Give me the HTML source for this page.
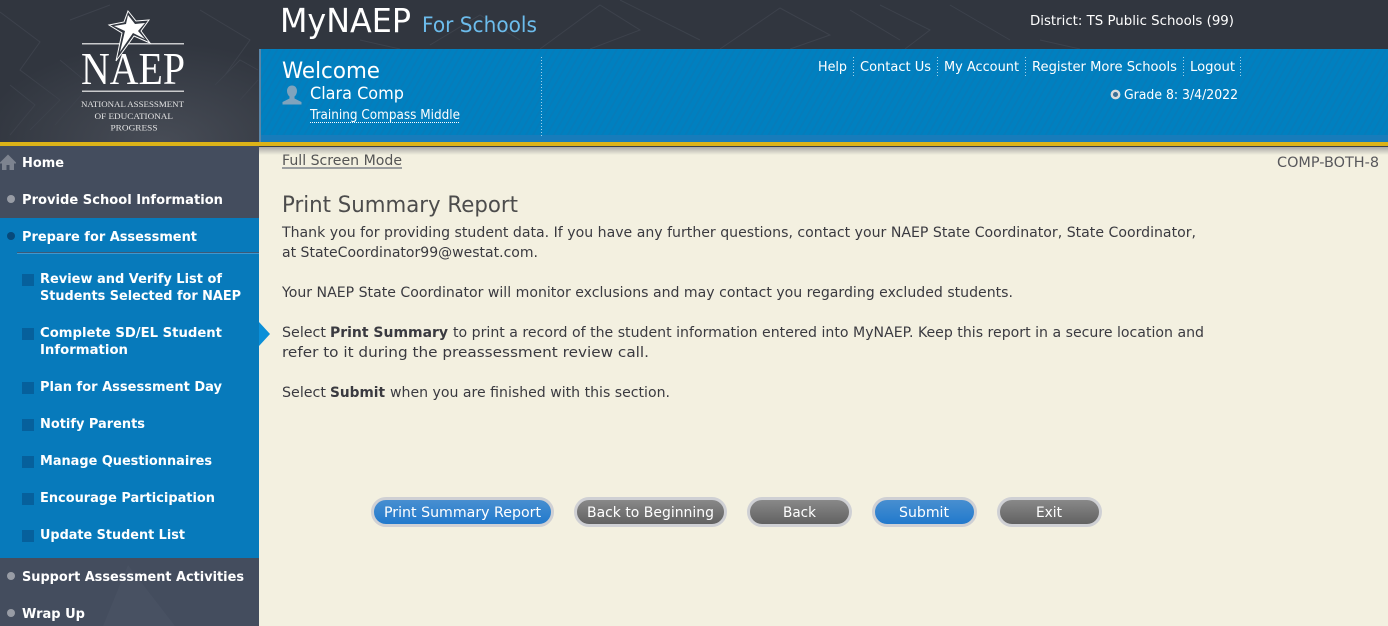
<!DOCTYPE html>
<html lang="en"><head><meta charset="utf-8"><title>MyNAEP For Schools</title>
<style>
html,body{margin:0;padding:0;width:1388px;height:626px;overflow:hidden;background:#f3f0e0}
svg{position:absolute;left:0;top:0;display:block}
text{font-family:"DejaVu Sans",Verdana,sans-serif;}
.b{font-weight:bold;fill:#fff;font-size:13.5px}
.t{font-size:14px;fill:#3a3a40}
.n{font-size:13px;fill:#fff}
.btn{font-size:14px;fill:#fff}
</style></head><body>
<svg width="1388" height="626" viewBox="0 0 1388 626" xmlns="http://www.w3.org/2000/svg">
<defs>
<linearGradient id="sh" x1="0" y1="0" x2="0" y2="1"><stop offset="0" stop-color="#a9a9a6"/><stop offset="1" stop-color="#f3f0e0"/></linearGradient>
<radialGradient id="glow" cx="0.62" cy="1" r="0.7"><stop offset="0" stop-color="#474c56"/><stop offset="1" stop-color="#31363f"/></radialGradient>
<linearGradient id="bl" x1="0" y1="0" x2="0" y2="1"><stop offset="0" stop-color="#4a90d0"/><stop offset="1" stop-color="#1f78cc"/></linearGradient>
<linearGradient id="gr" x1="0" y1="0" x2="0" y2="1"><stop offset="0" stop-color="#8b8b8b"/><stop offset="1" stop-color="#5f5f5f"/></linearGradient>
<pattern id="hatch" width="6" height="6" patternUnits="userSpaceOnUse" patternTransform="rotate(30)"><rect width="6" height="6" fill="#0080c0"/><rect width="2" height="6" fill="#067cba"/></pattern>
</defs>
<rect width="1388" height="626" fill="#f3f0e0"/>
<!-- header -->
<rect width="1388" height="49" fill="#31363f"/>
<rect width="259" height="142" fill="url(#glow)"/>
<g fill="none" stroke="#3d424c" stroke-width="1">
<path d="M0 12L40 42L20 70L60 100L30 130M70 20L110 5M200 10L250 40L225 75M240 100L258 80M215 85L240 60L258 70M60 60L90 85L55 125M10 85L35 105L10 135"/>
<path d="M540 49L600 5L640 30L590 49M620 0L700 40M720 49L780 8L830 35L790 49M850 10L900 40M880 5L930 30L905 49M950 5L1010 40M430 45L480 15L520 40M1040 40L1080 49M360 40L400 49"/>
</g>
<!-- blue panel -->
<rect x="259" y="49" width="1129" height="86" fill="url(#hatch)"/>
<rect x="259" y="135" width="1129" height="7" fill="#177cbb"/>
<rect x="259" y="49" width="2" height="93" fill="#5b86a8"/>
<rect x="0" y="142" width="1388" height="4" fill="#dcb318"/>
<rect x="259" y="146" width="1129" height="1" fill="#3a3f4a"/>
<rect x="259" y="147" width="1129" height="8" fill="url(#sh)"/>
<line x1="541.5" y1="57" x2="541.5" y2="137" stroke="#9fd0ea" stroke-dasharray="1 2"/>
<!-- logo -->
<rect x="82" y="43" width="102" height="1.5" fill="#c9cacc"/>
<rect x="82" y="90.5" width="102" height="1.5" fill="#c9cacc"/>
<text x="81" y="84" font-size="46" textLength="104" lengthAdjust="spacingAndGlyphs" style='font-family:"Liberation Serif",serif' fill="#fff">NAEP</text>
<path d="M128 11L136 21L149 20L141 31L150 43L134 36L116 61L122 33L109 25L124 22Z" fill="#31363f" stroke="#fff" stroke-width="1"/>
<path d="M128 15L135 24L145 23L138 31L145 39L133 33L120 52L125 31L114 26L126 24Z" fill="#fff"/>
<g fill="#e4e4e4">
<text x="81" y="107" font-size="8.500" textLength="103" lengthAdjust="spacingAndGlyphs" style='font-family:"Liberation Serif",serif'>NATIONAL ASSESSMENT</text>
<text x="94.5" y="119" font-size="8.500" textLength="78.500" lengthAdjust="spacingAndGlyphs" style='font-family:"Liberation Serif",serif'>OF EDUCATIONAL</text>
<text x="110.500" y="130.500" font-size="8.500" textLength="47" lengthAdjust="spacingAndGlyphs" style='font-family:"Liberation Serif",serif'>PROGRESS</text>
</g>
<!-- header text -->
<text x="280" y="32" font-size="33" fill="#fff" textLength="131" lengthAdjust="spacingAndGlyphs">MyNAEP</text>
<text x="422" y="32" font-size="21" fill="#6cbcec" textLength="115" lengthAdjust="spacingAndGlyphs">For Schools</text>
<text x="1030" y="25" class="n" textLength="204" lengthAdjust="spacingAndGlyphs">District: TS Public Schools (99)</text>
<text x="282" y="78" font-size="22" fill="#fff" textLength="98" lengthAdjust="spacingAndGlyphs">Welcome</text>
<path d="M292 85.500c-3.500 0-5 2.800-5 5.500 0 2.200 1 4.300 2.500 5.500v2l-7 3.500v2.500h19v-2.500l-7-3.500v-2c1.500-1.200 2.500-3.300 2.500-5.500 0-2.700-1.500-5.500-5-5.500z" fill="#7fa3bd"/>
<text x="310" y="99" font-size="17" fill="#fff" textLength="94" lengthAdjust="spacingAndGlyphs">Clara Comp</text>
<text x="310" y="119" class="n" textLength="150" lengthAdjust="spacingAndGlyphs">Training Compass Middle</text>
<line x1="310" y1="122.500" x2="460" y2="122.500" stroke="#fff" stroke-dasharray="1 1"/>
<text x="818" y="71" class="n" textLength="29" lengthAdjust="spacingAndGlyphs">Help</text>
<text x="860" y="71" class="n" textLength="71" lengthAdjust="spacingAndGlyphs">Contact Us</text>
<text x="944" y="71" class="n" textLength="75" lengthAdjust="spacingAndGlyphs">My Account</text>
<text x="1032" y="71" class="n" textLength="145" lengthAdjust="spacingAndGlyphs">Register More Schools</text>
<text x="1190" y="71" class="n" textLength="45" lengthAdjust="spacingAndGlyphs">Logout</text>
<g stroke="#9fd0ea" stroke-dasharray="1 2"><line x1="853.500" y1="57" x2="853.500" y2="76"/><line x1="937.500" y1="57" x2="937.500" y2="76"/><line x1="1025.500" y1="57" x2="1025.500" y2="76"/><line x1="1183.500" y1="57" x2="1183.500" y2="76"/><line x1="1240.500" y1="57" x2="1240.500" y2="76"/></g>
<circle cx="1115.500" cy="94.500" r="3.700" fill="#3a6f96" stroke="#dcdcdc" stroke-width="2.400"/>
<text x="1124" y="99" class="n" textLength="114" lengthAdjust="spacingAndGlyphs">Grade 8: 3/4/2022</text>
<!-- sidebar -->
<rect x="0" y="146" width="259" height="480" fill="#444d5e"/>
<path d="M103 626L128 565L175 626Z" fill="#485162"/>
<rect x="0" y="218" width="259" height="340" fill="#077abb"/>
<rect x="17" y="252" width="242" height="1" fill="#3c5a78"/>
<rect x="17" y="253" width="242" height="1" fill="#3f97cf"/>
<path d="M8 154.500L0 162.500v1h2V170h4.500v-5h3v5H14v-6.500h2v-1z" fill="#7d838f"/>
<circle cx="11" cy="199" r="4" fill="#989ca5"/>
<circle cx="11" cy="236" r="4" fill="#07497a"/>
<circle cx="11" cy="576" r="4" fill="#989ca5"/>
<circle cx="11" cy="613" r="4" fill="#989ca5"/>
<g fill="#06609c">
<rect x="22" y="274" width="12" height="12"/><rect x="22" y="328" width="12" height="12"/><rect x="22" y="382" width="12" height="12"/><rect x="22" y="419" width="12" height="12"/><rect x="22" y="456" width="12" height="12"/><rect x="22" y="493" width="12" height="12"/><rect x="22" y="530" width="12" height="12"/>
</g>
<text x="22" y="167" class="b" textLength="42" lengthAdjust="spacingAndGlyphs">Home</text>
<text x="22" y="204" class="b" textLength="201" lengthAdjust="spacingAndGlyphs">Provide School Information</text>
<text x="22" y="241" class="b" textLength="175" lengthAdjust="spacingAndGlyphs">Prepare for Assessment</text>
<text x="40" y="283" class="b" textLength="182" lengthAdjust="spacingAndGlyphs">Review and Verify List of</text>
<text x="40" y="300" class="b" textLength="201" lengthAdjust="spacingAndGlyphs">Students Selected for NAEP</text>
<text x="40" y="337" class="b" textLength="182" lengthAdjust="spacingAndGlyphs">Complete SD/EL Student</text>
<text x="40" y="354" class="b" textLength="88" lengthAdjust="spacingAndGlyphs">Information</text>
<text x="40" y="391" class="b" textLength="182" lengthAdjust="spacingAndGlyphs">Plan for Assessment Day</text>
<text x="40" y="428" class="b" textLength="105" lengthAdjust="spacingAndGlyphs">Notify Parents</text>
<text x="40" y="465" class="b" textLength="172" lengthAdjust="spacingAndGlyphs">Manage Questionnaires</text>
<text x="40" y="502" class="b" textLength="175" lengthAdjust="spacingAndGlyphs">Encourage Participation</text>
<text x="40" y="539" class="b" textLength="145" lengthAdjust="spacingAndGlyphs">Update Student List</text>
<text x="22" y="581" class="b" textLength="222" lengthAdjust="spacingAndGlyphs">Support Assessment Activities</text>
<text x="22" y="618" class="b" textLength="63" lengthAdjust="spacingAndGlyphs">Wrap Up</text>
<path d="M259 322L270 334L259 346Z" fill="#0a8fd8"/>
<!-- content -->
<text x="282" y="165" font-size="14" fill="#555" textLength="120" lengthAdjust="spacingAndGlyphs">Full Screen Mode</text>
<rect x="282" y="167.500" width="120" height="1" fill="#444d5e"/>
<text x="1277" y="167" font-size="14" fill="#58585c" textLength="102" lengthAdjust="spacingAndGlyphs">COMP-BOTH-8</text>
<text x="282" y="212" font-size="22" fill="#4c4c4c" textLength="236" lengthAdjust="spacingAndGlyphs">Print Summary Report</text>
<text x="282" y="237" class="t" textLength="914" lengthAdjust="spacingAndGlyphs">Thank you for providing student data. If you have any further questions, contact your NAEP State Coordinator, State Coordinator,</text>
<text x="282" y="257" class="t" textLength="256" lengthAdjust="spacingAndGlyphs">at StateCoordinator99@westat.com.</text>
<text x="282" y="297" class="t" textLength="731" lengthAdjust="spacingAndGlyphs">Your NAEP State Coordinator will monitor exclusions and may contact you regarding excluded students.</text>
<text x="282" y="337" class="t" textLength="44" lengthAdjust="spacingAndGlyphs">Select</text>
<text x="330" y="337" class="t" font-weight="bold" textLength="118" lengthAdjust="spacingAndGlyphs">Print Summary</text>
<text x="453" y="337" class="t" textLength="751" lengthAdjust="spacingAndGlyphs">to print a record of the student information entered into MyNAEP. Keep this report in a secure location and</text>
<text x="282" y="357" class="t" textLength="367" lengthAdjust="spacingAndGlyphs">refer to it during the preassessment review call.</text>
<text x="282" y="397" class="t" textLength="44" lengthAdjust="spacingAndGlyphs">Select</text>
<text x="330" y="397" class="t" font-weight="bold" textLength="55" lengthAdjust="spacingAndGlyphs">Submit</text>
<text x="390" y="397" class="t" textLength="280" lengthAdjust="spacingAndGlyphs">when you are finished with this section.</text>
<!-- buttons -->
<g stroke="#cfd0d4" stroke-width="3">
<rect x="372.500" y="498.500" width="180" height="27" rx="13.500" fill="url(#bl)"/>
<rect x="575.500" y="498.500" width="150" height="27" rx="13.500" fill="url(#gr)"/>
<rect x="748.500" y="498.500" width="102" height="27" rx="13.500" fill="url(#gr)"/>
<rect x="873.500" y="498.500" width="102" height="27" rx="13.500" fill="url(#bl)"/>
<rect x="998.500" y="498.500" width="102" height="27" rx="13.500" fill="url(#gr)"/>
</g>
<text x="384" y="517" class="btn" textLength="157" lengthAdjust="spacingAndGlyphs">Print Summary Report</text>
<text x="587" y="517" class="btn" textLength="127" lengthAdjust="spacingAndGlyphs">Back to Beginning</text>
<text x="783" y="517" class="btn" textLength="33" lengthAdjust="spacingAndGlyphs">Back</text>
<text x="899" y="517" class="btn" textLength="50" lengthAdjust="spacingAndGlyphs">Submit</text>
<text x="1036" y="517" class="btn" textLength="26" lengthAdjust="spacingAndGlyphs">Exit</text>
</svg>
</body></html>
